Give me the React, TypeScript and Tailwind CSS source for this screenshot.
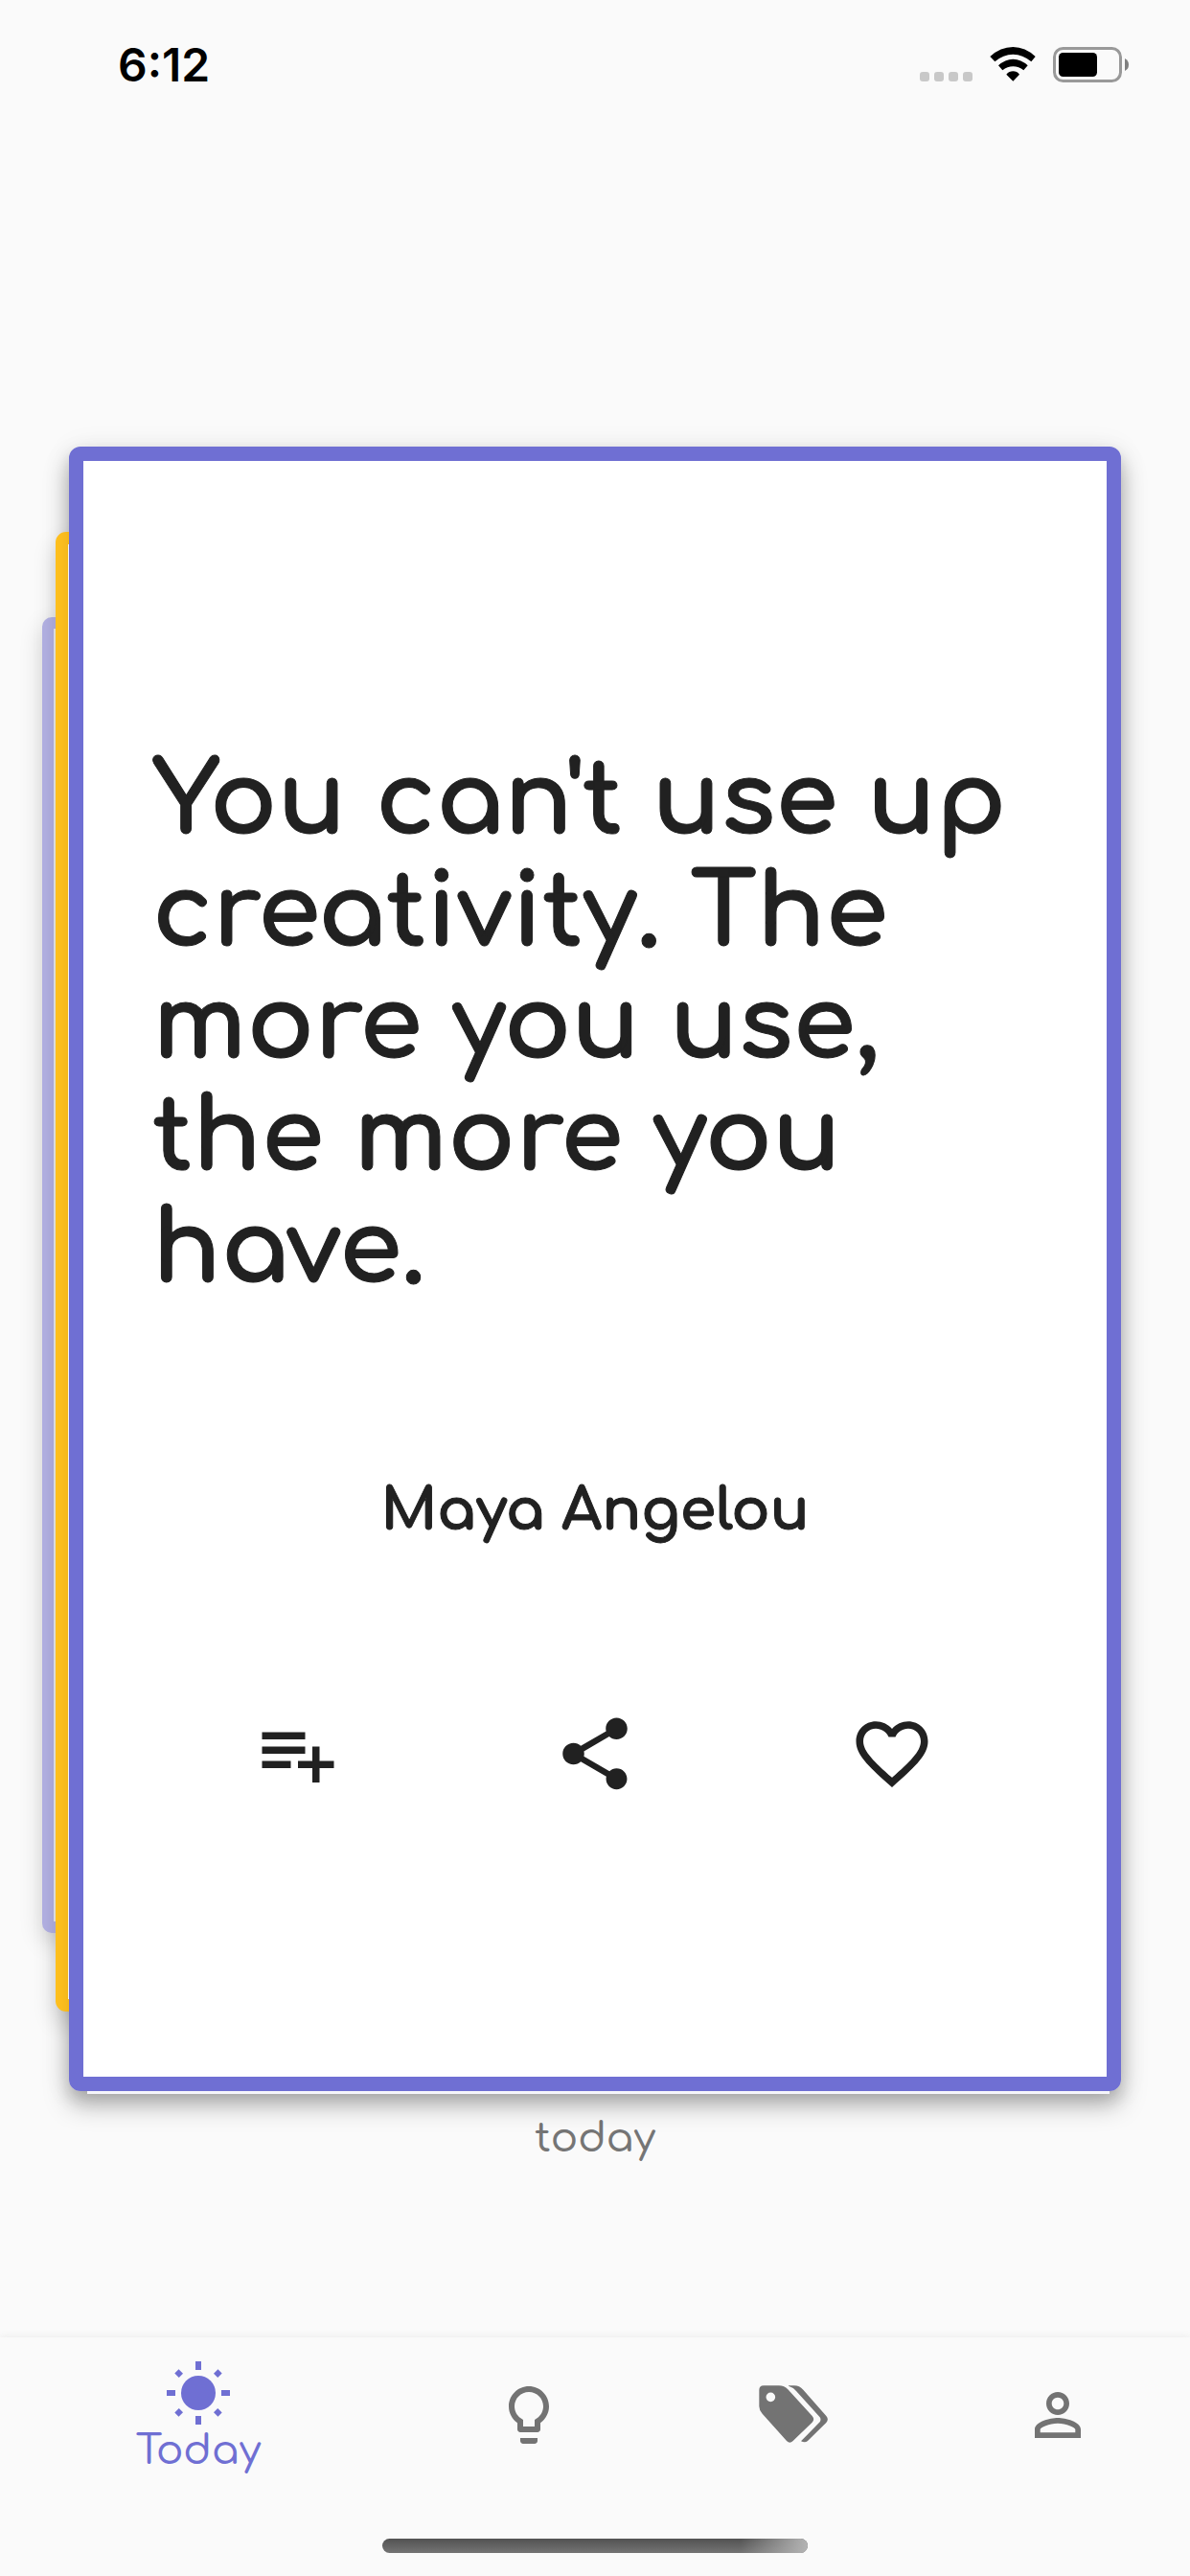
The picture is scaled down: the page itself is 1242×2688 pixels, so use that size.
import type { ReactNode } from "react";
import { MdShare, MdFavoriteBorder } from "react-icons/md";

function StatusBar() {
  return (
    <header className="flex h-[134px] items-center justify-between pl-[123px] pr-[63px] text-black">
      <time className="pt-[2px] font-['Inter',sans-serif] text-[48px] leading-[56px] font-semibold">6:12</time>
      <div className="flex items-center gap-[18px]">
        <div className="flex gap-[5px] pt-[26px]">
          {[0, 1, 2, 3].map((i) => (
            <span key={i} className="size-[10px] rounded-[3px] bg-[#c8c8c8]" />
          ))}
        </div>
        <svg className="h-[36px] w-[48px]" viewBox="304 58 144 108" aria-label="Wi-Fi">
          <path d="M305 88Q337 58 377 58Q415 58 447 88L434 104Q407 81 377 81Q346 81 320 104Z" />
          <path d="M331 116Q352 96 377 96Q402 96 423 116L410 131Q395 119 377 119Q359 119 344 131Z" />
          <path d="M356 144Q365 134 377 134Q389 134 397 144L377 165Z" />
        </svg>
        <svg className="h-[37px] w-[80px]" viewBox="0 0 80 37" aria-label="Battery">
          <rect x="1.5" y="1.5" width="69" height="34" rx="9" fill="none" stroke="#999" strokeWidth="3" />
          <rect x="6" y="6" width="40" height="25" rx="4.5" />
          <path d="M75 12Q79 14 79 18.500Q79 23 75 25Z" fill="#808080" />
        </svg>
      </div>
    </header>
  );
}

function PlaylistAddIcon() {
  return (
    <svg className="size-[90px]" viewBox="0 0 24 24" fill="currentColor" aria-hidden="true">
      <path d="M14 10H2v2h12v-2zm0-4H2v2h12V6zm4 8v-4h-2v4h-4v2h4v4h2v-4h4v-2h-4zM2 16h8v-2H2v2z" />
    </svg>
  );
}

function QuoteCard() {
  const action = "flex flex-1 justify-center";
  return (
    <article className="relative">
      <div className="absolute inset-0 rounded-[12px] shadow-[0_15px_27px_rgba(0,0,0,0.26),0_3px_30px_rgba(0,0,0,0.08)]" />
      <div className="absolute -left-[28px] top-[178px] bottom-[165px] w-1/2 rounded-[10px] border-[12px] border-[#b4b2e5] bg-[#ececec] shadow-[0_9px_24px_rgba(0,0,0,0.16)]" />
      <div className="absolute -left-[14px] top-[89px] bottom-[83px] w-1/2 rounded-[11px] border-[13px] border-[#ffc01e] bg-white shadow-[0_12px_24px_rgba(0,0,0,0.16)]" />
      <div className="relative rounded-[12px] border-[15px] border-[#6f6fd3] bg-white px-[72px] pt-[297px] pb-[292px] text-[#212121] shadow-[0_9px_15px_rgba(0,0,0,0.10)]">
        <blockquote className="text-[105px] leading-[117px] font-bold [-webkit-text-stroke:1px_currentColor]">
          You can't use up creativity. The more you use, the more you have.
        </blockquote>
        <p className="mt-[179px] text-center text-[60px] leading-[70px] font-bold [-webkit-text-stroke:1px_currentColor]">
          Maya Angelou
        </p>
        <div className="-mx-[3px] mt-[173px] flex">
          <div className={action}>
            <button type="button" aria-label="Add to list">
              <PlaylistAddIcon />
            </button>
          </div>
          <div className={action}>
            <button type="button" aria-label="Share">
              <MdShare size={90} />
            </button>
          </div>
          <div className={action}>
            <button type="button" aria-label="Favorite">
              <MdFavoriteBorder size={90} />
            </button>
          </div>
        </div>
      </div>
      <div className="absolute top-full left-[19px] right-[12px] h-[3px] bg-[#f5f5fa]" />
    </article>
  );
}

function SunIcon() {
  return (
    <svg className="size-[72px]" viewBox="0 0 24 24" fill="currentColor" aria-hidden="true">
      <circle cx="12" cy="12" r="6" />
      {[0, 90, 180, 270].map((a) => (
        <rect key={a} x="11" y="1" width="2" height="3" transform={`rotate(${a} 12 12)`} />
      ))}
      {[45, 135, 225, 315].map((a) => (
        <rect key={a} x="11" y="1.350" width="2" height="2.100" transform={`rotate(${a} 12 12)`} />
      ))}
    </svg>
  );
}

function BulbIcon() {
  return (
    <svg className="size-[72px]" viewBox="0 0 24 24" fill="currentColor" aria-hidden="true">
      <path d="M9 21c0 .55.45 1 1 1h4c.55 0 1-.45 1-1v-1H9v1zm3-19C8.140 2 5 5.140 5 9c0 2.380 1.190 4.470 3 5.740V17c0 .55.45 1 1 1h6c.55 0 1-.45 1-1v-2.260c1.810-1.270 3-3.360 3-5.740 0-3.860-3.140-7-7-7zm2.850 11.100l-.85.6V16h-4v-2.300l-.85-.6C7.800 12.160 7 10.630 7 9c0-2.760 2.240-5 5-5s5 2.240 5 5c0 1.630-.8 3.160-2.150 4.100z" />
    </svg>
  );
}

function TagsIcon() {
  return (
    <svg className="mb-[3px] h-[60px] w-[72px]" viewBox="155 206 216 180" fill="currentColor" aria-hidden="true">
      <path
        fillRule="evenodd"
        d="M170 207H218Q235 207 246 219L322 302Q331 312 322 322L262 380Q252 390 242 380L166 295Q156 284 156 272V221Q156 207 170 207ZM192 228.500A14.500 14.500 0 1 0 192 257.500A14.500 14.500 0 1 0 192 228.500Z"
      />
      <path d="M248 207H266Q282 207 294 220L366 302Q375 313 366 323L308 380Q300 387 287 381L346 321Q351 313 346 306L272 224Q262 212 248 208Z" />
    </svg>
  );
}

function PersonIcon() {
  return (
    <svg className="size-[72px]" viewBox="0 0 24 24" fill="currentColor" aria-hidden="true">
      <path d="M12 5.900c1.160 0 2.100.94 2.100 2.100s-.94 2.100-2.100 2.100S9.900 9.160 9.900 8s.94-2.100 2.100-2.100m0 9c2.970 0 6.100 1.460 6.100 2.100v1.100H5.900V17c0-.64 3.130-2.100 6.100-2.100M12 4C9.790 4 8 5.790 8 8s1.790 4 4 4 4-1.790 4-4-1.790-4-4-4zm0 9c-2.670 0-8 1.340-8 4v3h16v-3c0-2.660-5.330-4-8-4z" />
    </svg>
  );
}

function NavItem({ label, children }: { label: string; children: ReactNode }) {
  return (
    <button type="button" aria-label={label} className="flex flex-[2] items-center justify-center text-[#737373]">
      {children}
    </button>
  );
}

function BottomNav() {
  return (
    <footer className="bg-[#fafafa] shadow-[0_-1px_8px_rgba(0,0,0,0.06)]">
      <nav className="flex h-[162px]">
        <button
          type="button"
          aria-current="page"
          className="flex flex-[3] flex-col items-center pt-[22px] text-[#6f6fd3]"
        >
          <SunIcon />
          <span className="text-[42px] leading-[50px] font-medium">Today</span>
        </button>
        <NavItem label="Ideas">
          <BulbIcon />
        </NavItem>
        <NavItem label="Tags">
          <TagsIcon />
        </NavItem>
        <NavItem label="Profile">
          <PersonIcon />
        </NavItem>
      </nav>
      <div className="flex justify-center pt-[48px] pb-[24px]">
        <div className="h-[15px] w-[444px] overflow-hidden rounded-full bg-linear-to-b from-[#525252] to-[#747474]">
          <div className="ml-auto h-full w-[70px] bg-linear-to-r from-transparent to-[#b4b4b4]" />
        </div>
      </div>
    </footer>
  );
}

export default function App() {
  return (
    <div className="flex min-h-screen flex-col overflow-hidden bg-[#fafafa] font-['Comfortaa','Inter',sans-serif]">
      <StatusBar />
      <main className="flex-1 px-[72px] pt-[332px]">
        <QuoteCard />
        <p className="mt-[24px] text-center text-[42px] leading-[52px] font-medium text-[#757575]">today</p>
      </main>
      <BottomNav />
    </div>
  );
}
